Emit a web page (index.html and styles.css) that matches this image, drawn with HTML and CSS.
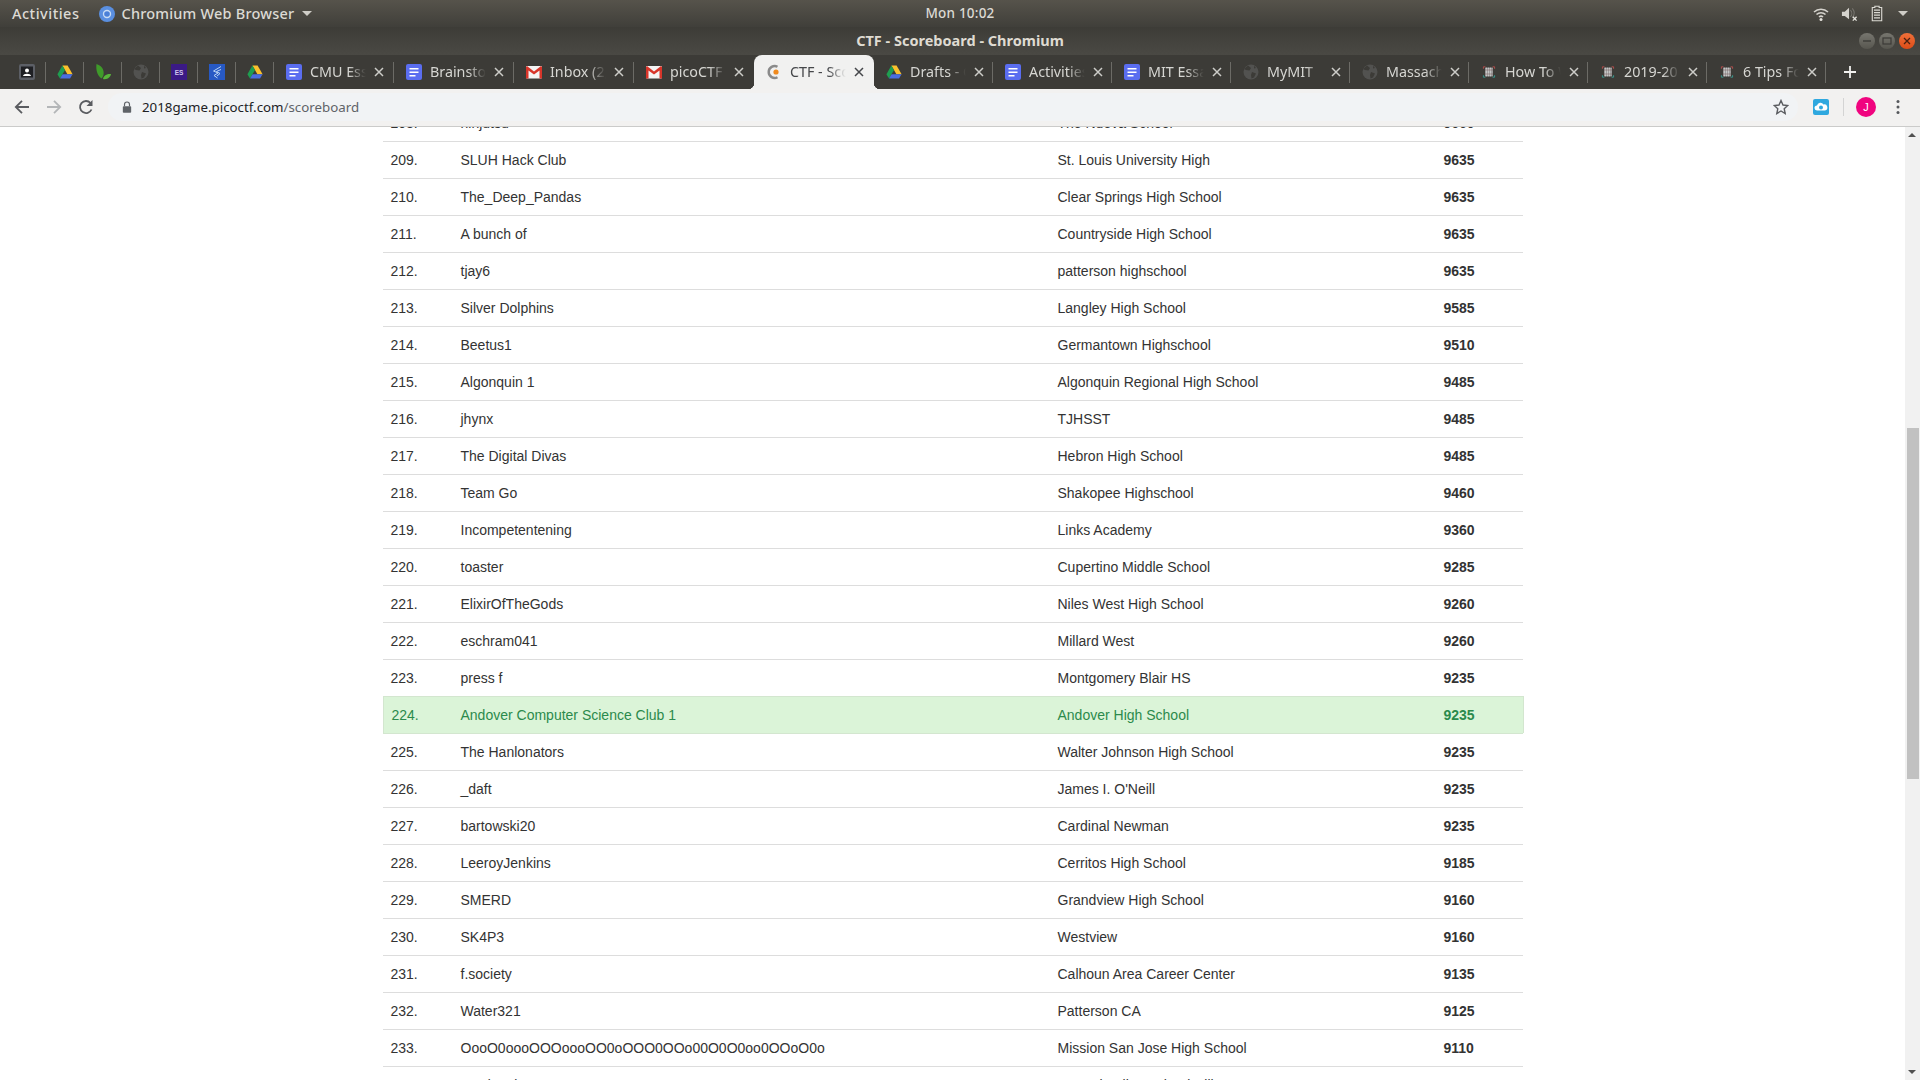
FILE: index.html
```html
<!DOCTYPE html>
<html lang="en">
<head>
<meta charset="utf-8">
<title>CTF - Scoreboard - Chromium</title>
<link rel="stylesheet" href="styles.css">
</head>
<body>
<svg class="defs" width="0" height="0" aria-hidden="true">
  <symbol id="i-drive" viewBox="0 0 16 16"><path d="M5.4 1.5h5.2l5 8.7h-5.2z" fill="#fbc02d"/><path d="M5.4 1.5 .4 10.2l2.6 4.4 5-8.7z" fill="#1e9e50"/><path d="M3 14.6h10l2.6-4.4H5.6z" fill="#4a6ee0"/></symbol>
  <symbol id="i-leaf" viewBox="0 0 16 16"><path d="M1.5 0C6 1.5 9.5 5 8.5 11 8 13 7 14 6.500 14.500 3 12 .5 7 1.500 0z" fill="#3f9a2a"/><path d="M8 15c.5-3 3-5.500 8-5-.5 3-3.500 6-8 5z" fill="#58b53a"/></symbol>
  <symbol id="i-globe" viewBox="0 0 16 16"><circle cx="8" cy="8" r="7.500" fill="#525250"/><path d="M5 1.500 8 4 6.500 6.500 3 6 1 5zM9 8l4 1.500-2 4-2.500 1L8 11zM11 1.800 13 4l-2 .5z" fill="#3c3b37"/></symbol>
  <symbol id="i-doc" viewBox="0 0 16 16"><rect width="16" height="16" rx="2" fill="#5a6df0" x="0" y="0"/><path d="M3.500 4h9v1.600h-9zM3.500 7.500h9v1.600h-9zM3.500 11h6v1.600h-6z" fill="#fff"/></symbol>
  <symbol id="i-mail" viewBox="0 0 16 16"><rect y="2" width="16" height="12.500" rx="1" fill="#f4f4f4"/><path d="M0 3v11.500h2.500V6.500L8 10.500l5.500-4v8H16V3l-1-1-7 5.500L1 2z" fill="#d8352a"/></symbol>
  <symbol id="i-pico" viewBox="0 0 16 16"><path d="M11.500 2.700A6 6 0 1 0 11.500 13.300" fill="none" stroke="#8a8a8a" stroke-width="2.400"/><circle cx="10" cy="8" r="2.600" fill="#f08a1d"/></symbol>
  <symbol id="i-book" viewBox="-2 -2 20 20"><rect x="3" y="2.500" width="10" height="11" fill="#9a9a9a"/><path d="M5 2.500v11M7.500 2.500v11M10 2.500v11" stroke="#e4e4e4" stroke-width=".8"/><path d="M3 5.500h10M3 10.500h10" stroke="#7a5a5a" stroke-width=".7"/><path d="M1 1.500h2.500M1 1.500V4M15 1.500h-2.500M15 1.500V4" stroke="#c95050" fill="none"/><path d="M1 14.500h2.500M1 14.500V12M15 14.500h-2.500M15 14.500V12" stroke="#3aa8a0" fill="none"/></symbol>
  <symbol id="i-x" viewBox="0 0 10 10"><path d="M1 1l8 8M9 1 1 9" stroke="currentColor" stroke-width="1.500" fill="none"/></symbol>
</svg>

<header class="topbar">
  <div class="top-left">
    <span class="top-item top-activities">Activities</span>
    <span class="top-app">
      <svg class="app-icon" viewBox="0 0 16 16"><circle cx="8" cy="8" r="8" fill="#5a8fe0"/><circle cx="8" cy="8" r="4.200" fill="#c8dcf5"/><circle cx="8" cy="8" r="2.800" fill="#4a80d8"/></svg>
      <span class="top-item">Chromium Web Browser</span>
      <span class="caret"></span>
    </span>
  </div>
  <div class="top-clock">Mon 10:02</div>
  <div class="top-right">
    <svg class="tray wifi" viewBox="0 0 16 16"><path d="M1 6a10 10 0 0 1 14 0M3.500 8.500a6.500 6.500 0 0 1 9 0M6 11a3 3 0 0 1 4 0" fill="none" stroke="#d5d3cd" stroke-width="1.500"/><circle cx="8" cy="13.500" r="1.500" fill="#e4e2dc"/></svg>
    <svg class="tray speaker" viewBox="0 0 18 16"><path d="M1 5.500h3L8.500 1.500v12L4 10H1z" fill="#d5d3cd"/><path d="M10 4a5 5 0 0 1 0 7M12 2a8 8 0 0 1 0 10" fill="none" stroke="#77756f" stroke-width="1.100"/><path d="M12.500 11l4 4M16.500 11l-4 4" stroke="#e4e2dc" stroke-width="1.400"/></svg>
    <svg class="tray battery" viewBox="0 0 14 18"><path d="M4.500 0.500h5v1.500h3v15.500h-11V2h3z" fill="none" stroke="#dcdad4" stroke-width="1.300"/><path d="M3.500 5h7M3.500 8h7M3.500 11h7M3.500 14h7" stroke="#dcdad4" stroke-width="1.500"/></svg>
    <span class="caret"></span>
  </div>
</header>

<div class="titlebar">
  <div class="title">CTF - Scoreboard - Chromium</div>
  <div class="winbtns">
    <span class="winbtn"><svg viewBox="0 0 10 10"><path d="M1 5h8" stroke="#3c3b37" stroke-width="1.400"/></svg></span>
    <span class="winbtn"><svg viewBox="0 0 10 10"><rect x="1" y="2" width="8" height="6" fill="none" stroke="#3c3b37" stroke-width="1.200"/></svg></span>
    <span class="winbtn close"><svg viewBox="0 0 10 10"><path d="M2 2l6 6M8 2 2 8" stroke="#4a2010" stroke-width="1.300"/></svg></span>
  </div>
</div>

<nav class="tabstrip">
  <span class="pin"><svg class="fav" viewBox="0 0 16 16"><rect width="16" height="16" rx="2" fill="#5c5f66"/><rect x="2" y="2.500" width="12" height="11" fill="#1f2024"/><circle cx="8" cy="6.500" r="2" fill="#fff"/><path d="M4 12c.3-3 7.700-3 8 0z" fill="#fff"/></svg></span>
  <span class="pin"><svg class="fav"><use href="#i-drive"/></svg></span>
  <span class="pin"><svg class="fav"><use href="#i-leaf"/></svg></span>
  <span class="pin"><svg class="fav"><use href="#i-globe"/></svg></span>
  <span class="pin"><svg class="fav" viewBox="0 0 16 16"><rect width="16" height="16" fill="#3b1a86"/><text x="8" y="10.500" class="es">ES</text></svg></span>
  <span class="pin"><svg class="fav" viewBox="0 0 16 16"><rect width="16" height="16" fill="#2759c4"/><path d="M12 2.500 4.500 7 9 9 5 11.500l3.500 2.500M12 5.500 7.500 7.500 11 9.500 8 12" fill="none" stroke="#b9d4f5" stroke-width="1"/></svg></span>
  <span class="pin"><svg class="fav"><use href="#i-drive"/></svg></span>

  <span class="tab"><svg class="fav"><use href="#i-doc"/></svg><span class="tab-text">CMU Essay</span><svg class="tab-x"><use href="#i-x"/></svg></span>
  <span class="tab"><svg class="fav"><use href="#i-doc"/></svg><span class="tab-text">Brainstorm</span><svg class="tab-x"><use href="#i-x"/></svg></span>
  <span class="tab"><svg class="fav"><use href="#i-mail"/></svg><span class="tab-text">Inbox (2,</span><svg class="tab-x"><use href="#i-x"/></svg></span>
  <span class="tab tab-nosep"><svg class="fav"><use href="#i-mail"/></svg><span class="tab-text">picoCTF</span><svg class="tab-x"><use href="#i-x"/></svg></span>
  <span class="tab tab-active"><svg class="fav"><use href="#i-pico"/></svg><span class="tab-text">CTF - Score</span><svg class="tab-x"><use href="#i-x"/></svg></span>
  <span class="tab tab-narrow"><svg class="fav"><use href="#i-drive"/></svg><span class="tab-text">Drafts - G</span><svg class="tab-x"><use href="#i-x"/></svg></span>
  <span class="tab tab-narrow"><svg class="fav"><use href="#i-doc"/></svg><span class="tab-text">Activities</span><svg class="tab-x"><use href="#i-x"/></svg></span>
  <span class="tab tab-narrow"><svg class="fav"><use href="#i-doc"/></svg><span class="tab-text">MIT Essay</span><svg class="tab-x"><use href="#i-x"/></svg></span>
  <span class="tab tab-narrow"><svg class="fav"><use href="#i-globe"/></svg><span class="tab-text">MyMIT</span><svg class="tab-x"><use href="#i-x"/></svg></span>
  <span class="tab tab-narrow"><svg class="fav"><use href="#i-globe"/></svg><span class="tab-text">Massachu</span><svg class="tab-x"><use href="#i-x"/></svg></span>
  <span class="tab tab-narrow"><svg class="fav"><use href="#i-book"/></svg><span class="tab-text">How To W</span><svg class="tab-x"><use href="#i-x"/></svg></span>
  <span class="tab tab-narrow"><svg class="fav"><use href="#i-book"/></svg><span class="tab-text">2019-20 C</span><svg class="tab-x"><use href="#i-x"/></svg></span>
  <span class="tab tab-narrow"><svg class="fav"><use href="#i-book"/></svg><span class="tab-text">6 Tips For</span><svg class="tab-x"><use href="#i-x"/></svg></span>
  <svg class="newtab" viewBox="0 0 12 12"><path d="M6 0v12M0 6h12" stroke="#f1f1ef" stroke-width="1.800"/></svg>
</nav>

<div class="toolbar">
  <svg class="tool back" viewBox="0 0 16 16"><path d="M15 8H2M8 1.800 1.800 8 8 14.200" fill="none" stroke="#5a5c60" stroke-width="1.800"/></svg>
  <svg class="tool forward" viewBox="0 0 16 16"><path d="M1 8h13M8 1.800 14.200 8 8 14.200" fill="none" stroke="#b4b6b8" stroke-width="1.800"/></svg>
  <svg class="tool reload" viewBox="0 0 16 16"><path d="M13.500 10.500A6 6 0 1 1 12.500 4" fill="none" stroke="#5a5c60" stroke-width="1.800"/><path d="M14.500 1v6h-6z" fill="#5a5c60"/></svg>
  <div class="omnibox">
    <svg class="lock" viewBox="0 0 12 14"><path d="M3 6V4a3 3 0 0 1 6 0v2" fill="none" stroke="#5f6368" stroke-width="1.400"/><rect x="1" y="6" width="10" height="8" rx="1" fill="#5f6368"/></svg>
    <span class="url">2018game.picoctf.com<span class="url-path">/scoreboard</span></span>
    <svg class="star" viewBox="0 0 16 16"><path d="M8 1.500 10 6l4.800.5-3.600 3.200 1 4.800L8 12l-4.200 2.500 1-4.800L1.200 6.500 6 6z" fill="none" stroke="#5a5c60" stroke-width="1.400"/></svg>
  </div>
  <svg class="ext" viewBox="0 0 16 16"><rect width="16" height="16" rx="2" fill="#2fa8df"/><path d="M4 11.500a2.500 2.500 0 0 1 0-5 3.500 3.500 0 0 1 6.500-1A3 3 0 0 1 12 11.500z" fill="#fff"/><circle cx="8" cy="8.500" r="2" fill="#2fa8df"/></svg>
  <span class="tool-sep"></span>
  <span class="avatar">J</span>
  <svg class="menu" viewBox="0 0 4 16"><circle cx="2" cy="2.500" r="1.500" fill="#55575b"/><circle cx="2" cy="8" r="1.500" fill="#55575b"/><circle cx="2" cy="13.500" r="1.500" fill="#55575b"/></svg>
</div>

<div class="viewport">
  <main class="page">
    <table class="scores">
      <colgroup><col class="c-rank"><col class="c-name"><col class="c-school"><col class="c-score"></colgroup>
      <tbody>
        <tr><td>208.</td><td>ninjutsu</td><td>The Nueva School</td><td class="pts">9660</td></tr>
        <tr><td>209.</td><td>SLUH Hack Club</td><td>St. Louis University High</td><td class="pts">9635</td></tr>
        <tr><td>210.</td><td>The_Deep_Pandas</td><td>Clear Springs High School</td><td class="pts">9635</td></tr>
        <tr><td>211.</td><td>A bunch of</td><td>Countryside High School</td><td class="pts">9635</td></tr>
        <tr><td>212.</td><td>tjay6</td><td>patterson highschool</td><td class="pts">9635</td></tr>
        <tr><td>213.</td><td>Silver Dolphins</td><td>Langley High School</td><td class="pts">9585</td></tr>
        <tr><td>214.</td><td>Beetus1</td><td>Germantown Highschool</td><td class="pts">9510</td></tr>
        <tr><td>215.</td><td>Algonquin 1</td><td>Algonquin Regional High School</td><td class="pts">9485</td></tr>
        <tr><td>216.</td><td>jhynx</td><td>TJHSST</td><td class="pts">9485</td></tr>
        <tr><td>217.</td><td>The Digital Divas</td><td>Hebron High School</td><td class="pts">9485</td></tr>
        <tr><td>218.</td><td>Team Go</td><td>Shakopee Highschool</td><td class="pts">9460</td></tr>
        <tr><td>219.</td><td>Incompetentening</td><td>Links Academy</td><td class="pts">9360</td></tr>
        <tr><td>220.</td><td>toaster</td><td>Cupertino Middle School</td><td class="pts">9285</td></tr>
        <tr><td>221.</td><td>ElixirOfTheGods</td><td>Niles West High School</td><td class="pts">9260</td></tr>
        <tr><td>222.</td><td>eschram041</td><td>Millard West</td><td class="pts">9260</td></tr>
        <tr><td>223.</td><td>press f</td><td>Montgomery Blair HS</td><td class="pts">9235</td></tr>
        <tr class="mine"><td>224.</td><td>Andover Computer Science Club 1</td><td>Andover High School</td><td class="pts">9235</td></tr>
        <tr class="after-mine"><td>225.</td><td>The Hanlonators</td><td>Walter Johnson High School</td><td class="pts">9235</td></tr>
        <tr><td>226.</td><td>_daft</td><td>James I. O'Neill</td><td class="pts">9235</td></tr>
        <tr><td>227.</td><td>bartowski20</td><td>Cardinal Newman</td><td class="pts">9235</td></tr>
        <tr><td>228.</td><td>LeeroyJenkins</td><td>Cerritos High School</td><td class="pts">9185</td></tr>
        <tr><td>229.</td><td>SMERD</td><td>Grandview High School</td><td class="pts">9160</td></tr>
        <tr><td>230.</td><td>SK4P3</td><td>Westview</td><td class="pts">9160</td></tr>
        <tr><td>231.</td><td>f.society</td><td>Calhoun Area Career Center</td><td class="pts">9135</td></tr>
        <tr><td>232.</td><td>Water321</td><td>Patterson CA</td><td class="pts">9125</td></tr>
        <tr><td>233.</td><td>OooO0oooOOOoooOO0oOOO0OOo00O0O0oo0OOoO0o</td><td>Mission San Jose High School</td><td class="pts">9110</td></tr>
        <tr><td>234.</td><td>sand crab</td><td>Central Valley School Hill</td><td class="pts">9110</td></tr>
      </tbody>
    </table>
  </main>
  <aside class="scrollbar">
    <span class="arrow-up"></span>
    <span class="thumb"></span>
    <span class="arrow-down"></span>
  </aside>
</div>
</body>
</html>
```
FILE: styles.css
```css
* { box-sizing: border-box; }
html, body { margin: 0; height: 100%; overflow: hidden; }
body {
  width: 1920px;
  height: 1080px;
  display: flex;
  flex-direction: column;
  font-family: "Liberation Sans", Arial, sans-serif;
  font-size: 14px;
  color: #333;
  background: #fff;
}
.defs { position: absolute; }

/* GNOME top bar */
.topbar {
  height: 27px;
  flex: none;
  display: grid;
  grid-template-columns: 1fr auto 1fr;
  align-items: center;
  padding: 0 12px;
  background: linear-gradient(#56534b, #403f3a);
  font-family: "Noto Sans", sans-serif;
  font-size: 14.500px;
  font-weight: 500;
  color: #dcdad4;
}
.top-left { display: flex; align-items: center; gap: 20px; }
.top-left .top-item { letter-spacing: .2px; padding-bottom: 2px; }
.top-left .top-activities { letter-spacing: .5px; }
.top-app { display: flex; align-items: center; gap: 6px; }
.top-app .caret { margin-left: 2px; }
.app-icon { width: 16px; height: 16px; }
.top-clock { font-size: 13.500px; letter-spacing: .2px; padding-bottom: 1px; }
.top-right { display: flex; align-items: center; justify-content: flex-end; }
.caret {
  width: 0;
  height: 0;
  border-left: 5px solid transparent;
  border-right: 5px solid transparent;
  border-top: 5px solid #cfcdc7;
}
.tray { height: 16px; flex: none; }
.wifi { width: 16px; margin-right: 12px; }
.speaker { width: 17px; margin-right: 13px; }
.battery { width: 12px; height: 17px; margin-right: 15px; }

/* window title bar */
.titlebar {
  height: 28px;
  flex: none;
  display: flex;
  align-items: center;
  justify-content: center;
  position: relative;
  background: linear-gradient(#3d3c37, #4a4944);
}
.title {
  padding-bottom: 2px;
  font-family: "Noto Sans", sans-serif;
  font-size: 14.500px;
  font-weight: 700;
  color: #dfdbd2;
}
.winbtns {
  position: absolute;
  right: 5px;
  top: 6px;
  display: flex;
  gap: 4px;
}
.winbtn {
  width: 16px;
  height: 16px;
  border-radius: 50%;
  background: linear-gradient(#77766f, #57564f);
  display: flex;
  align-items: center;
  justify-content: center;
}
.winbtn svg { width: 10px; height: 10px; }
.winbtn.close { background: linear-gradient(#f0703a, #dc4c17); }

/* tab strip */
.tabstrip {
  height: 34px;
  flex: none;
  display: flex;
  align-items: stretch;
  padding-left: 8px;
  background: #3c3b37;
  font-family: "Noto Sans", sans-serif;
  font-size: 14.300px;
  color: #d6d6d2;
}
.pin, .tab {
  flex: none;
  position: relative;
  display: flex;
  align-items: center;
}
.pin::after, .tab::after {
  content: "";
  position: absolute;
  right: 0;
  top: 7px;
  height: 21px;
  width: 1px;
  background: #6c6b66;
}
.pin { width: 38px; justify-content: center; }
.tab { width: 120px; padding-left: 12px; }
.tab-narrow { width: 119px; }
.fav { width: 16px; height: 16px; flex: none; }
.es { font: 700 6.500px "Liberation Sans", sans-serif; fill: #cfc6ef; text-anchor: middle; }
.tab-text {
  width: 57px;
  margin-left: 8px;
  padding-bottom: 2px;
  overflow: hidden;
  white-space: nowrap;
  -webkit-mask-image: linear-gradient(to right, #000 68%, transparent 98%);
  mask-image: linear-gradient(to right, #000 68%, transparent 98%);
}
.tab-x { width: 10px; height: 10px; margin-left: 7px; color: #cdcdc9; flex: none; }
.tab-nosep::after, .tab-active::after { display: none; }
.tab-active {
  background: #f1f1f0;
  border-radius: 8px 8px 0 0;
  color: #45474a;
}
.tab-active .tab-x { color: #45474a; }
.tab-active::before {
  content: "";
  position: absolute;
  right: -6px;
  bottom: 0;
  width: 6px;
  height: 6px;
  background: radial-gradient(circle at 100% 0, transparent 6px, #f1f1f0 6.500px);
}
.tab-nosep::before {
  content: "";
  position: absolute;
  right: 0;
  bottom: 0;
  width: 6px;
  height: 6px;
  background: radial-gradient(circle at 0 0, transparent 6px, #f1f1f0 6.500px);
}
.newtab { width: 12px; height: 12px; margin: auto 0 auto 18px; flex: none; }

/* toolbar */
.toolbar {
  height: 38px;
  flex: none;
  display: flex;
  align-items: center;
  padding: 0 0 1px 14px;
  background: #f2f1f0;
  border-bottom: 1px solid #cbcbca;
}
.tool { width: 16px; height: 16px; flex: none; }
.forward { margin-left: 16px; }
.reload { margin-left: 16px; }
.omnibox {
  width: 1690px;
  height: 28px;
  margin-left: 14px;
  display: flex;
  align-items: center;
  padding: 0 9px 0 14px;
  border-radius: 14px;
  background: #f1f3f5;
}
.lock { width: 10px; height: 12px; flex: none; }
.url {
  margin-left: 10px;
  flex: 1;
  font-family: "Noto Sans", sans-serif;
  font-size: 13.300px;
  color: #202124;
}
.url-path { color: #5f6368; }
.star { width: 16px; height: 16px; flex: none; }
.ext { width: 16px; height: 16px; flex: none; margin-left: 15px; }
.tool-sep { width: 1px; height: 18px; margin-left: 14px; background: #d4d4d4; flex: none; }
.avatar {
  width: 20px;
  height: 20px;
  margin-left: 12px;
  flex: none;
  border-radius: 50%;
  background: #f0047f;
  color: #fff;
  font-size: 11px;
  line-height: 20px;
  text-align: center;
}
.menu { width: 4px; height: 16px; margin-left: 20px; flex: none; }

/* page */
.viewport {
  flex: 1;
  min-height: 0;
  display: flex;
  overflow: hidden;
}
.page {
  flex: 1;
  min-width: 0;
  padding: 0 15px;
  display: flex;
  justify-content: center;
}
.scores {
  flex: none;
  align-self: flex-start;
  width: 1140px;
  margin-top: -23px;
  table-layout: fixed;
  border-collapse: separate;
  border-spacing: 0;
  line-height: 20px;
}
.c-rank { width: 70px; }
.c-name { width: 597px; }
.c-school { width: 386px; }
.c-score { width: 87px; }
.scores td {
  height: 37px;
  padding: 8px;
  border-top: 1px solid #ddd;
  white-space: nowrap;
}
.scores .pts { font-weight: 700; }
.mine td {
  background: #dbf4d8;
  color: #2b8a4c;
  border-top-color: #d3e6cf;
}
.mine td:first-child { border-left: 1px solid #d3e6cf; }
.mine td:last-child { box-shadow: 1px 0 0 #d3e6cf; }
.after-mine td { border-top-color: #d3e6cf; }

/* scrollbar */
.scrollbar {
  width: 15px;
  flex: none;
  position: relative;
  background: #f1f1f1;
}
.thumb {
  position: absolute;
  left: 2px;
  right: 1px;
  top: 301px;
  height: 351px;
  background: #c1c1c1;
}
.arrow-up, .arrow-down {
  position: absolute;
  left: 3px;
  width: 0;
  height: 0;
  border-left: 4px solid transparent;
  border-right: 4px solid transparent;
}
.arrow-up { top: 6px; border-bottom: 4px solid #505050; }
.arrow-down { bottom: 6px; border-top: 4px solid #505050; }
```
